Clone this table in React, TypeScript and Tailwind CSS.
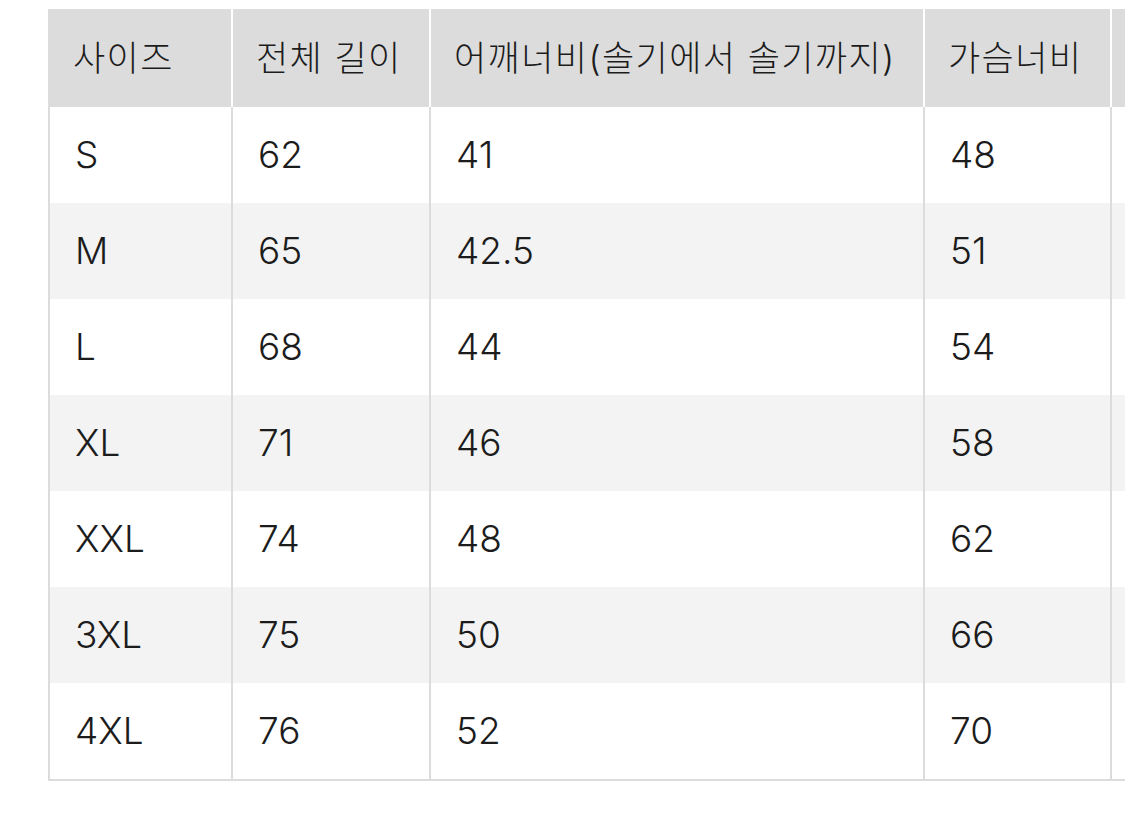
import React from "react";

const headers = ["사이즈", "전체 길이", "어깨너비(솔기에서 솔기까지)", "가슴너비", ""];
const rows = [
  ["S", "62", "41", "48", ""],
  ["M", "65", "42.5", "51", ""],
  ["L", "68", "44", "54", ""],
  ["XL", "71", "46", "58", ""],
  ["XXL", "74", "48", "62", ""],
  ["3XL", "75", "50", "66", ""],
  ["4XL", "76", "52", "70", ""],
];

const widths = ["w-[183px]", "w-[198px]", "w-[494px]", "w-[187px]", "w-[200px]"];

export default function App() {
  return (
    <div
      className="w-[1125px] h-[816px] bg-white overflow-hidden pt-[9px] pl-[48px] text-[#1c1c1c]"
      style={{ fontFamily: 'Inter, "Noto Sans CJK KR", sans-serif' }}
    >
      <div className="flex flex-col w-[1262px] border-b-2 border-[#dcdcdc]">
        <div className="flex h-[98px]">
          {headers.map((h, i) => (
            <div
              key={i}
              className={`${widths[i]} shrink-0 h-full flex items-center pl-[23px] bg-[#dcdcdc] border-l-2 ${
                i === 0 ? "border-[#dcdcdc]" : "border-white"
              } text-[35px] font-light tracking-[0.04em] whitespace-nowrap`}
            >
              {h}
            </div>
          ))}
        </div>
        {rows.map((r, ri) => (
          <div key={ri} className={`flex h-[96px] ${ri % 2 === 1 ? "bg-[#f3f3f3]" : "bg-white"}`}>
            {r.map((c, ci) => (
              <div
                key={ci}
                className={`${widths[ci]} shrink-0 h-full flex items-center pl-[25px] border-l-2 border-[#dcdcdc] text-[37px] font-light`}
              >
                {c}
              </div>
            ))}
          </div>
        ))}
      </div>
    </div>
  );
}
